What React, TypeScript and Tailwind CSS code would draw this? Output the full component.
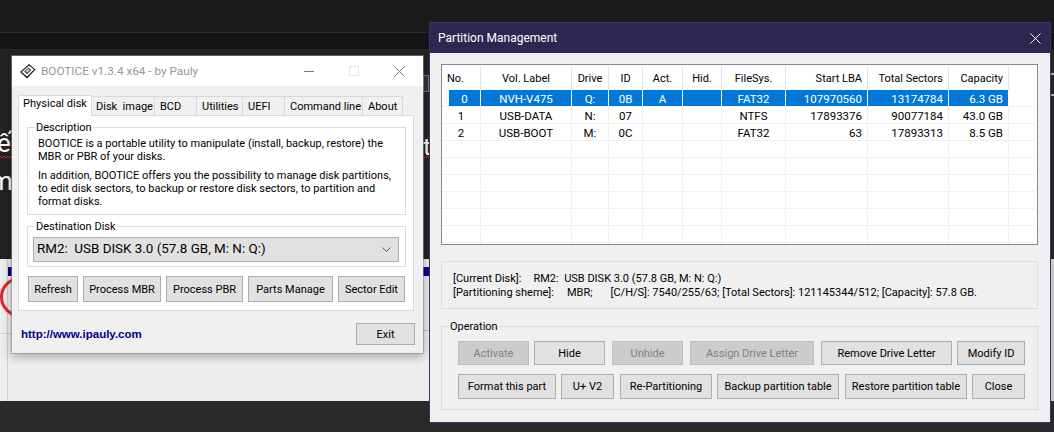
const font = "font-['Roboto',sans-serif]";

type Btn = { label: string; width: number; disabled?: boolean; focus?: boolean; className?: string };

const WinButton = ({ label, width, disabled, focus, className = "" }: Btn) => (
  <button
    style={{ width }}
    className={`h-full shrink-0 whitespace-nowrap border pt-[2px] text-[11px] ${className} ${
      disabled
        ? "border-[#bfbfbf] bg-[#cccccc] text-[#7f7f7f]"
        : focus
          ? "border-[#9fadb8] bg-[#e1e1e1] text-black"
          : "border-[#adadad] bg-[#e1e1e1] text-black"
    }`}
  >
    {label}
  </button>
);

const GroupBox = ({ title, className, children }: { title?: string; className: string; children: React.ReactNode }) => (
  <div className={`relative border border-[#dcdcdc] ${className}`}>
    {title && <span className="absolute -top-[8px] left-[7px] whitespace-nowrap bg-inherit px-[1px] text-[11px] leading-[16px] text-black">{title}</span>}
    {children}
  </div>
);

const BooticeLogo = () => (
  <svg width="17" height="16" viewBox="0 0 17 16">
    <path d="M10 1 16.5 6.5 8 15.5 1 9Z" fill="#111" />
    <path d="M10 2.4 15 6.5 8 13.6 2.6 9Z" fill="#fff" />
    <path d="M9.4 4.4 12.4 7 8 11.2 5 8.6Z" fill="#444" />
    <path d="M9.2 5.8 10.8 7 8 9.6 6.6 8.4Z" fill="#ddd" />
  </svg>
);

const BootTabs = [
  { label: "Disk  image", width: 64, pad: "pl-[4px]" },
  { label: "BCD", width: 43, pad: "pl-[5px]" },
  { label: "Utilities", width: 47, pad: "pl-[5px]" },
  { label: "UEFI", width: 43, pad: "pl-[5px]" },
  { label: "Command line", width: 79, pad: "pl-[5px]" },
  { label: "About", width: 41, pad: "pl-[5px]" },
];

const BootWindow = () => (
  <div className="absolute left-[12px] top-[56px] h-[297px] w-[411px] bg-[#f0f0f0] shadow-[0_3px_10px_rgba(0,0,0,0.35)] outline outline-1 outline-[#8c8c8c]/60">
    <div className="flex h-[30px] items-center bg-white pl-[7px]">
      <BooticeLogo />
      <span className="ml-[5px] mt-px whitespace-nowrap text-[11.75px] text-[#9a93a0]">BOOTICE v1.3.4 x64 - by Pauly</span>
      <div className="ml-auto flex items-center">
        <div className="h-px w-[10px] bg-[#777]" />
        <div className="ml-[35px] h-[10px] w-[10px] border border-[#e5e5e5]" />
        <svg className="ml-[35px] mr-[18px]" width="11" height="11" viewBox="0 0 11 11">
          <path d="M0.5 0.5 10.5 10.5M10.5 0.5 0.5 10.5" stroke="#777" fill="none" />
        </svg>
      </div>
    </div>
    <div className="flex h-[29px] items-end pl-[6px]">
      <div className="relative z-10 -mb-px flex h-[21px] w-[74px] items-start justify-center whitespace-nowrap border border-b-0 border-[#d9d9d9] bg-white text-[11px] leading-[16px]">
        Physical disk
      </div>
      {BootTabs.map((t) => (
        <div
          key={t.label}
          style={{ width: t.width }}
          className={`-ml-px flex h-[19px] items-center whitespace-pre border border-b-0 border-[#d9d9d9] bg-[#f0f0f0] pt-[2px] text-[11px] ${t.pad}`}
        >
          {t.label}
        </div>
      ))}
    </div>
    <div className="ml-[6px] mr-[9px] h-[196px] border border-[#d9d9d9] bg-white pl-[8px] pr-[7px] pt-[11px]">
      <GroupBox title="Description" className="h-[88px] whitespace-nowrap bg-white pl-[10px] pt-[9px] text-[11px] leading-[13px]">
        <p>BOOTICE is a portable utility to manipulate (install, backup, restore) the<br />MBR or PBR of your disks.</p>
        <p className="mt-[6px]">In addition, BOOTICE offers you the possibility to manage disk partitions,<br />to edit disk sectors, to backup or restore disk sectors, to partition and<br />format disks.</p>
      </GroupBox>
      <GroupBox title="Destination Disk" className="mt-[11px] h-[41px] bg-white pl-[5px] pr-[6px] pt-[10px]">
        <div className="flex h-[25px] items-center justify-between whitespace-pre border border-[#adadad] bg-[#e1e1e1] pl-[3px] pr-[7px] text-[13.4px]">
          RM2:  USB DISK 3.0 (57.8 GB, M: N: Q:)
          <svg width="9" height="6" viewBox="0 0 9 6"><path d="M0.5 0.5 4.5 4.5 8.5 0.5" stroke="#555" fill="none" /></svg>
        </div>
      </GroupBox>
      <div className="ml-px mt-[9px] flex h-[26px] gap-[5px]">
        <WinButton label="Refresh" width={50} />
        <WinButton label="Process MBR" width={78} />
        <WinButton label="Process PBR" width={77} />
        <WinButton label="Parts Manage" width={85} />
        <WinButton label="Sector Edit" width={67} />
      </div>
    </div>
    <div className="mt-[12px] flex h-[22px] items-start justify-between pl-[9px] pr-[8px]">
      <span className="mt-[3px] font-['Liberation_Sans',sans-serif] text-[11.5px] font-bold text-[#00008b]">http://www.ipauly.com</span>
      <WinButton label="Exit" width={59} />
    </div>
  </div>
);

const columns = [
  { label: "No.", width: 39, align: "text-center", head: "text-left" },
  { label: "Vol. Label", width: 91, align: "text-center", head: "text-center" },
  { label: "Drive", width: 37, align: "text-center", head: "text-center" },
  { label: "ID", width: 34, align: "text-center", head: "text-center" },
  { label: "Act.", width: 40, align: "text-center", head: "text-center" },
  { label: "Hid.", width: 39, align: "text-center", head: "text-center" },
  { label: "FileSys.", width: 64, align: "text-center", head: "text-center" },
  { label: "Start LBA", width: 82, align: "text-right", head: "text-right" },
  { label: "Total Sectors", width: 81, align: "text-right", head: "text-right" },
  { label: "Capacity", width: 60, align: "text-right", head: "text-right" },
];

const rows = [
  ["0", "NVH-V475", "Q:", "0B", "A", "", "FAT32", "107970560", "13174784", "6.3 GB"],
  ["1", "USB-DATA", "N:", "07", "", "", "NTFS", "17893376", "90077184", "43.0 GB"],
  ["2", "USB-BOOT", "M:", "0C", "", "", "FAT32", "63", "17893313", "8.5 GB"],
  ...Array.from({ length: 8 }, () => ["", "", "", "", "", "", "", "", "", ""]),
];

const PartitionTable = () => (
  <div className="h-[181px] overflow-hidden border border-[#828790] bg-white pt-px text-[11.5px]">
    <div className="flex h-[24px] text-[11px]">
      {columns.map((c) => (
        <div
          key={c.label}
          style={{ width: c.width }}
          className={`shrink-0 whitespace-nowrap border-r border-[#e5e5e5] px-[5px] leading-[25px] ${c.head}`}
        >
          {c.label}
        </div>
      ))}
    </div>
    {rows.map((row, i) => (
      <div key={i} className="flex h-[17px] w-[593px] border-b border-[#f0f0f0] leading-[18px]">
        {row.map((cell, j) => (
          <div
            key={j}
            style={{ width: i === 0 && j === 0 ? 32 : columns[j].width }}
            className={`shrink-0 border-r ${columns[j].align} ${
              i === 0 ? "border-white bg-[#0078d7] text-white" : "border-[#f0f0f0]"
            } ${i === 0 && j === 0 ? "ml-[7px]" : "px-[5px]"}`}
          >
            {cell}
          </div>
        ))}
      </div>
    ))}
  </div>
);

const row1: Btn[] = [
  { label: "Activate", width: 71, disabled: true },
  { label: "Hide", width: 71, className: "ml-[5px]" },
  { label: "Unhide", width: 71, disabled: true, className: "ml-[7px]" },
  { label: "Assign Drive Letter", width: 124, disabled: true, className: "ml-[7px]" },
  { label: "Remove Drive Letter", width: 131, className: "ml-[7px]" },
  { label: "Modify ID", width: 68, focus: true, className: "ml-[5px]" },
];

const row2: Btn[] = [
  { label: "Format this part", width: 98 },
  { label: "U+ V2", width: 53, className: "ml-[5px]" },
  { label: "Re-Partitioning", width: 92, className: "ml-[6px]" },
  { label: "Backup partition table", width: 122, className: "ml-[5px]" },
  { label: "Restore partition table", width: 122, className: "ml-[6px]" },
  { label: "Close", width: 53, className: "ml-[5px]" },
];

const PartitionWindow = () => (
  <div className="absolute left-[429px] top-[22px] h-[401px] w-[622px] border border-[#3a3462] bg-[#f0f0f0]">
    <div className="flex h-[30px] items-center justify-between bg-[#2d2752] pl-[8px] pr-[9px] text-[12px] text-white">
      Partition Management
      <svg width="11" height="11" viewBox="0 0 11 11"><path d="M0.5 0.5 10.5 10.5M10.5 0.5 0.5 10.5" stroke="#fff" fill="none" /></svg>
    </div>
    <div className="pl-[11px] pr-[12px] pt-[11px]">
      <PartitionTable />
      <GroupBox className="mt-[16px] h-[48px] whitespace-pre pl-[11px] pt-[10px] text-[11px] leading-[14px]">
        <p>[Current Disk]:<span className="ml-[12px]">RM2:  USB DISK 3.0 (57.8 GB, M: N: Q:)</span></p>
        <p>[Partitioning sheme]:<span className="ml-[13px]">MBR;</span><span className="ml-[18px]">[C/H/S]: 7540/255/63; [Total Sectors]: 121145344/512; [Capacity]: 57.8 GB.</span></p>
      </GroupBox>
      <GroupBox title="Operation" className="mt-[17px] h-[84px] bg-[#f0f0f0] pl-[16px] pt-[14px]">
        <div className="flex h-[24px]">
          {row1.map((b) => <WinButton key={b.label} {...b} />)}
        </div>
        <div className="mt-[9px] flex h-[25px]">
          {row2.map((b) => <WinButton key={b.label} {...b} />)}
        </div>
      </GroupBox>
    </div>
  </div>
);

// desktop behind the two dialogs
const Backdrop = () => (
  <div className="flex h-[432px] flex-col">
    <div className="h-[33px] border-b border-[#2a2a2a] bg-[#1a1a1a]" />
    <div className="h-[16px] bg-[#151515]" />
    <div className="relative h-[210px] overflow-hidden bg-[#232323] text-[26px] leading-[32px] text-white">
      <span className="absolute left-[-3px] top-[78px]">ế</span>
      <span className="absolute left-[-10px] top-[116px]">m</span>
      <span className="absolute left-[423px] top-[82px] text-[24px]">t</span>
      <svg className="absolute left-0 top-[106px]" width="12" height="4" viewBox="0 0 12 4">
        <path d="M0 1 2 3 4 1 6 3 8 1 10 3 12 1" stroke="#e8222a" fill="none" />
      </svg>
      <svg className="absolute left-[423px] top-[106px]" width="6" height="4" viewBox="0 0 6 4">
        <path d="M0 1 2 3 4 1 6 3" stroke="#e8222a" fill="none" />
      </svg>
      <div className="absolute left-[423px] top-[26px] h-[17px] w-[6px] border border-[#777] bg-[#333]" />
      <div className="absolute left-[1050px] top-[24px] h-[2px] w-[4px] bg-[#aaaaaa]" />
      <div className="absolute left-[1050px] top-[45px] h-[2px] w-[4px] bg-[#aaaaaa]" />
    </div>
    <div className="relative h-[142px] overflow-hidden bg-[#eeeeee]">
      <div className="absolute left-[8px] top-[8px] h-[9px] w-[4px] bg-[#00008b]" />
      <div className="absolute left-[423px] top-[8px] h-[9px] w-[6px] bg-[#00008b]" />
      <div className="absolute left-0 top-[74px] h-px w-[12px] bg-[#cfcfcf]" />
      <div className="absolute left-[423px] top-[71px] h-px w-[6px] bg-[#bdbdbd]" />
      <div className="absolute left-[7px] top-0 h-full w-px bg-[#cfcfcf]" />
      <div className="absolute left-0 top-[18px] h-[40px] w-[40px] rounded-full border-[3px] border-[#e8222a]" />
      <div className="absolute left-[1050px] top-0 h-full w-[4px] bg-[#c8c8c8]" />
    </div>
    <div className="h-[31px] bg-[#2a2a2a]" />
  </div>
);

export default function App() {
  return (
    <div className={`relative h-[432px] w-[1054px] overflow-hidden ${font}`}>
      <Backdrop />
      <BootWindow />
      <PartitionWindow />
    </div>
  );
}
